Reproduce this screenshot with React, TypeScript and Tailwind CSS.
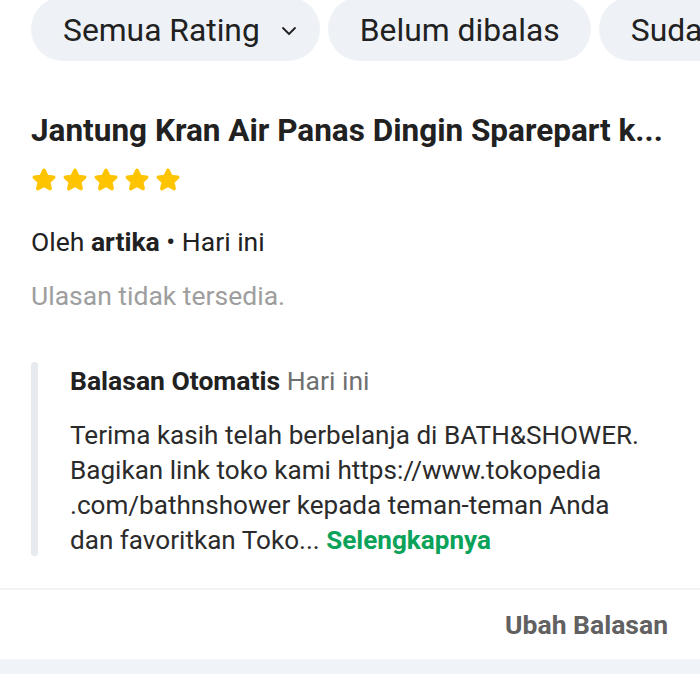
import { ChevronDown } from 'lucide-react';

const Star = () => (
    <svg width="26" height="26" viewBox="0 0 24 24">
        <polygon
            points="12,3 14.8,8.8 21,9.5 16.4,13.8 17.7,20 12,16.9 6.3,20 7.6,13.8 3,9.5 9.2,8.8"
            fill="#ffc400" stroke="#ffc400" strokeWidth="3.2" strokeLinejoin="round"
        />
    </svg>
);

const chips = [
    { label: 'Semua Rating', dropdown: true },
    { label: 'Belum dibalas' },
    { label: 'Sudah dibalas' },
];

export default function App() {
    return (
        <div className="w-[700px] h-[700px] overflow-hidden bg-white text-[#212121]" style={{ fontFamily: 'Roboto, "Liberation Sans", sans-serif' }}>
            <div className="flex gap-2 pl-[31px] -mt-[3px] whitespace-nowrap">
                {chips.map(c => (
                    <div key={c.label} className="flex items-center shrink-0 h-16 pt-1 rounded-full bg-[#eef1f6] pl-8 pr-[31px] text-[31.8px]">
                        {c.label}
                        {c.dropdown && <ChevronDown className="ml-[17px] -mr-[12px]" size={24} strokeWidth={1.8} />}
                    </div>
                ))}
            </div>

            <div className="px-[31px]">
                <h2 className="mt-[50px] text-[31.5px] leading-10 font-bold whitespace-nowrap overflow-hidden">Jantung Kran Air Panas Dingin Sparepart k...</h2>
                <div className="mt-[16px] flex gap-[5px]">
                    {[0, 1, 2, 3, 4].map(i => <Star key={i} />)}
                </div>
                <p className="mt-[33px] text-[26.5px] leading-8">
                    Oleh <span className="font-bold">artika</span> • Hari ini
                </p>
                <p className="mt-[22px] text-[26.5px] leading-8 text-[#9e9e9e]">Ulasan tidak tersedia.</p>

                <div className="mt-[50px] flex">
                    <div className="w-[7px] h-[194px] rounded-full bg-[#e6e9ee] shrink-0" />
                    <div className="pl-8 pt-[3px]">
                        <p className="text-[26.5px] leading-8">
                            <span className="font-bold">Balasan Otomatis</span> <span className="text-[#707070]">Hari ini</span>
                        </p>
                        <p className="mt-[21px] text-[26.1px] leading-[35px] text-[#2b2b2b] whitespace-nowrap">
                            Terima kasih telah berbelanja di BATH&amp;SHOWER.<br />
                            Bagikan link toko kami https://www.tokopedia<br />
                            .com/bathnshower kepada teman-teman Anda<br />
                            dan favoritkan Toko... <span className="font-bold text-[#0ba25a]">Selengkapnya</span>
                        </p>
                    </div>
                </div>
            </div>

            <div className="mt-[30px] h-[2px] bg-[#f0f2f5]" />
            <div className="h-[69px] flex items-center justify-end pr-8">
                <button className="text-[26.5px] font-bold text-[#616161]">Ubah Balasan</button>
            </div>
            <div className="h-[15px] bg-[#f0f3f7]" />
        </div>
    );
}
